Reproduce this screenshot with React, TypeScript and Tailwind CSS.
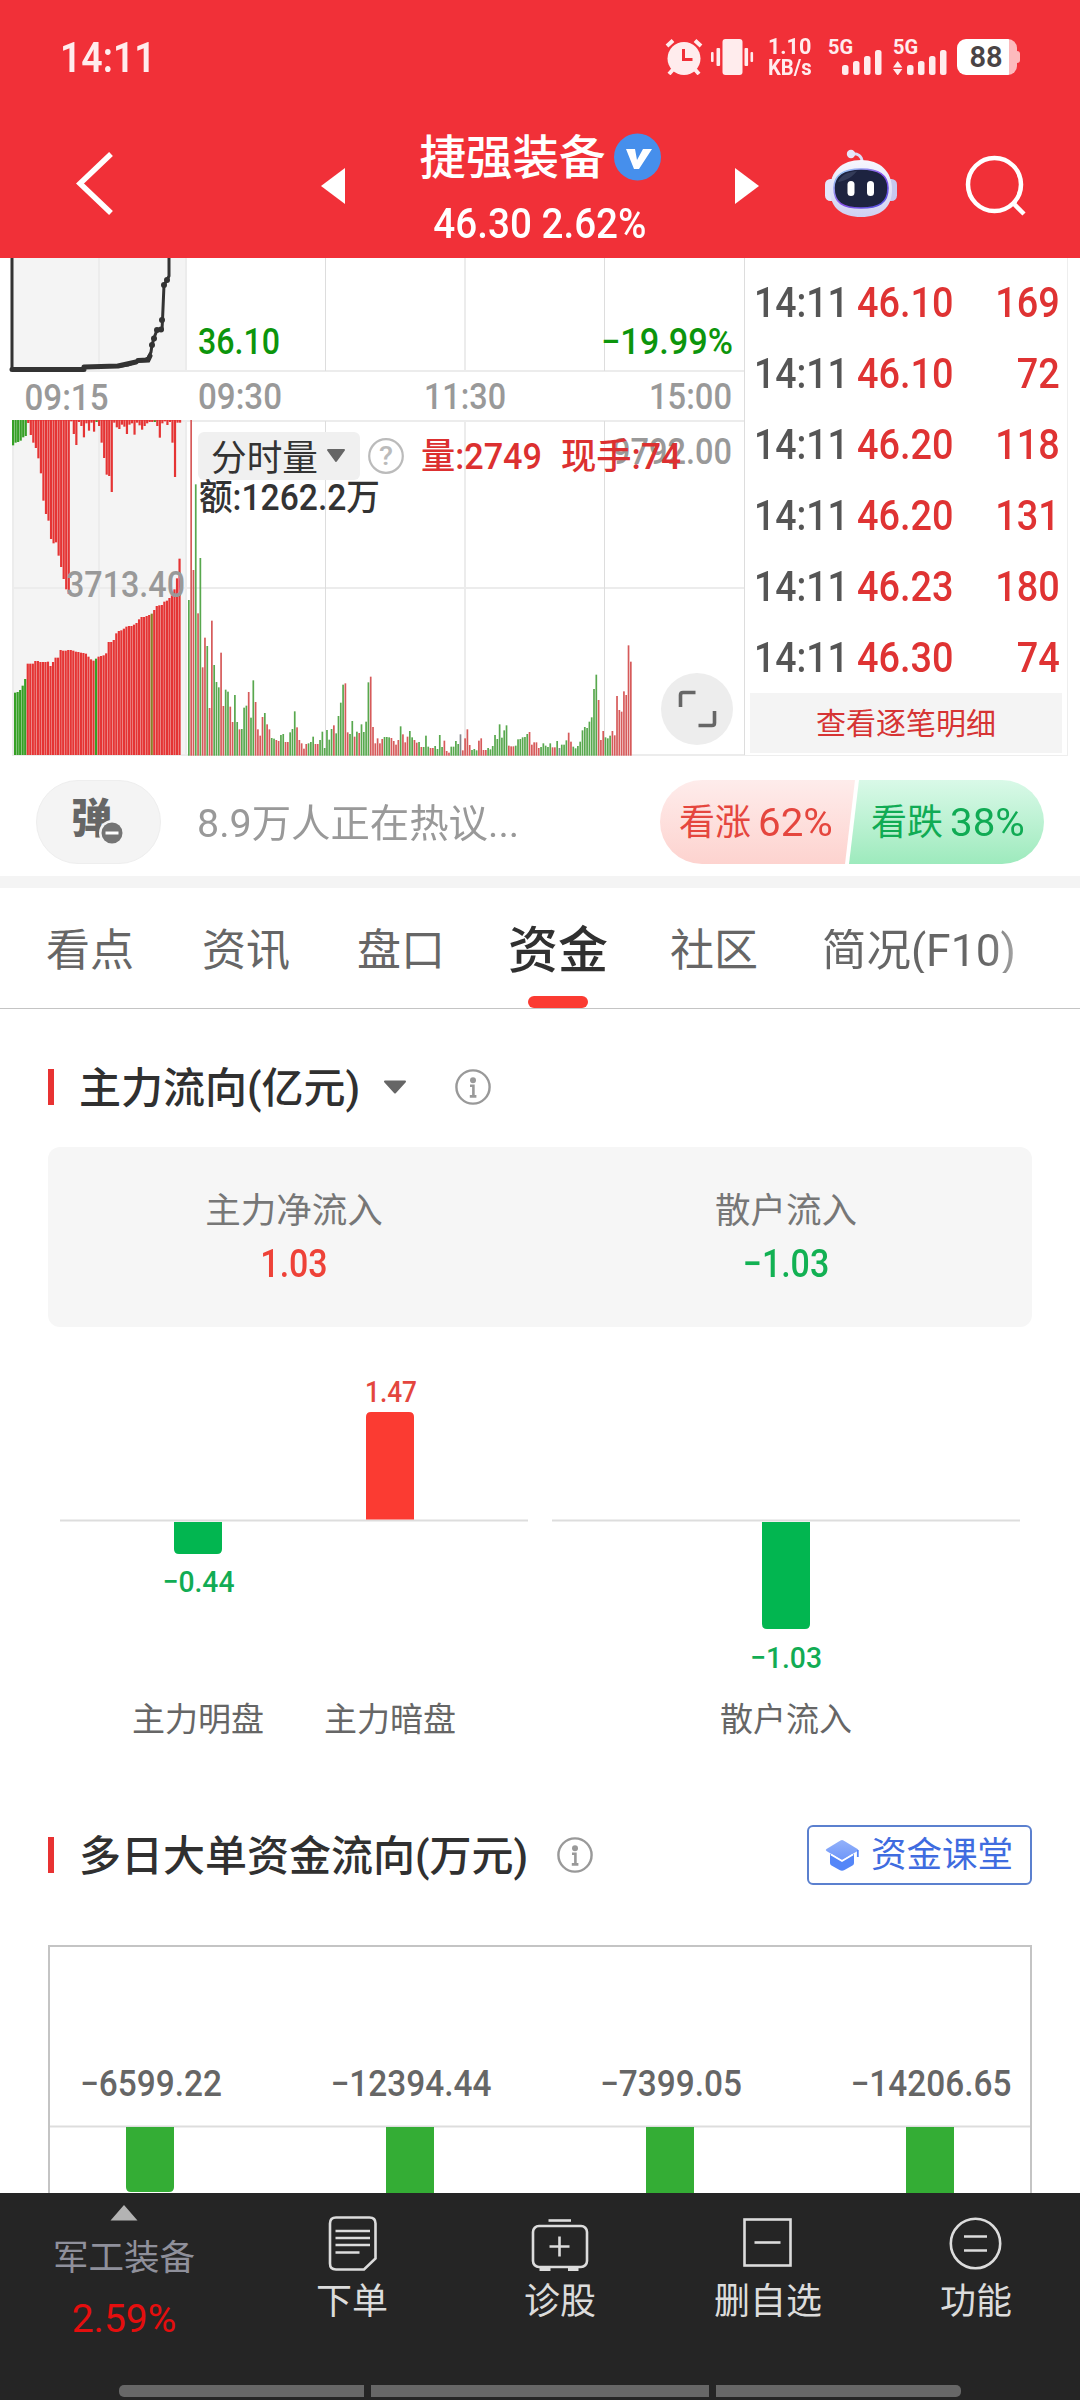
import type { ReactNode } from 'react';

type Tone = 'r' | 'g' | 'n';

const TONES: Record<Tone, string> = { r: '#d65a5a', g: '#58a84e', n: '#85858c' };

// minute volume, tone + top edge of the bar at 3x density (axis sits at 1517)
const VOLUME =
  'g1050 r510 r960 g703 r1090 g924 r1252 r1163 g1188 r1374 r1112 g1245 g1296 g1312 r1208 r1368 g1319 g1325 r1370 r1416 ' +
  'g1335 g1416 r1438 g1437 g1373 g1367 r1326 g1403 g1291 r1356 r1438 r1457 r1401 g1389 r1423 r1438 g1464 g1466 r1470 r1473 ' +
  'g1455 g1452 r1476 r1476 g1447 g1437 g1384 r1432 r1470 r1480 r1496 r1482 g1480 g1476 g1460 r1482 r1482 g1470 g1445 g1494 ' +
  'g1440 g1469 g1437 r1426 g1450 g1398 g1358 g1304 r1300 r1447 g1452 g1413 r1460 g1445 r1449 g1423 g1446 g1415 g1297 r1280 ' +
  'r1431 r1480 r1465 r1480 r1467 g1461 g1461 g1462 r1464 r1473 r1484 r1470 g1429 r1453 r1477 r1460 g1443 g1462 r1470 r1478 ' +
  'g1476 r1491 g1491 g1457 g1490 r1494 r1494 g1488 g1497 g1455 g1491 r1472 r1503 r1508 g1490 g1490 g1473 g1482 n1453 r1501 ' +
  'r1465 r1438 r1485 g1500 g1497 g1501 r1472 r1465 r1500 r1500 g1494 g1498 g1488 g1455 g1467 g1423 g1463 g1441 g1426 r1487 ' +
  'r1489 r1489 g1487 g1468 g1467 g1462 g1461 g1452 r1446 r1484 r1477 r1477 r1494 g1491 g1480 g1487 g1491 g1480 r1492 r1492 ' +
  'g1473 n1494 g1484 g1484 g1471 r1448 r1475 g1490 g1495 g1488 g1475 g1441 g1431 g1434 g1415 g1402 g1317 g1274 r1350 r1470 ' +
  'r1443 g1462 g1465 g1457 r1443 r1456 r1338 r1380 r1385 r1324 r1335 r1186 r1235';

// call auction: unmatched volume hangs from the top, matched volume grows from the axis
const UNMATCHED = [
  586, 578, 576, 572, 562, 558, 519, 555, 578, 594, 625, 670, 752, 792, 812, 867, 880, 877, 917, 951, 987, 1018, 1032,
  514, 552, 585, 516, 528, 562, 520, 542, 518, 545, 516, 528, 578, 624, 674, 678, 726, 518, 532, 537, 524, 530, 552,
  524, 520, 554, 518, 526, 539, 528, 520, 516, 516, 516, 528, 563, 520, 514, 525, 516, 578, 681, 518, 518,
];
const MATCHED = [
  1328, 1326, 1320, 1307, 1287, 1241, 1241, 1241, 1233, 1233, 1236, 1236, 1236, 1235, 1248, 1236, 1223, 1223, 1200,
  1202, 1202, 1200, 1200, 1202, 1205, 1206, 1208, 1209, 1211, 1220, 1228, 1232, 1226, 1220, 1218, 1216, 1210, 1176,
  1176, 1170, 1150, 1143, 1141, 1136, 1130, 1128, 1128, 1124, 1119, 1108, 1101, 1101, 1098, 1095, 1091, 1080, 1068,
  1066, 1065, 1055, 1052, 1044, 1036, 1018, 985, 926,
];

const PRICE_DOTS = [
  [152, 345],
  [154, 338.5],
  [157, 330],
  [161, 329.5],
  [162, 320],
  [164, 285],
  [167, 280],
];

const TRADES = [
  { time: '14:11', price: '46.10', lots: '169' },
  { time: '14:11', price: '46.10', lots: '72' },
  { time: '14:11', price: '46.20', lots: '118' },
  { time: '14:11', price: '46.20', lots: '131' },
  { time: '14:11', price: '46.23', lots: '180' },
  { time: '14:11', price: '46.30', lots: '74' },
];

const DAILY = [
  { x: 150, value: '-6599.22', w: 142, h: 65 },
  { x: 410, value: '-12394.44', w: 161, h: 90 },
  { x: 670, value: '-7399.05', w: 142, h: 90 },
  { x: 930, value: '-14206.65', w: 161, h: 90 },
];

interface LabelProps {
  x: number;
  y: number;
  w: number;
  size: number;
  fill: string;
  anchor?: 'start' | 'middle' | 'end';
  weight?: number;
  children: string;
}

function Label({ x, y, w, size, fill, anchor = 'start', weight = 500, children }: LabelProps) {
  return (
    <text
      x={x}
      y={y}
      fontSize={size}
      fill={fill}
      fontWeight={weight}
      textAnchor={anchor}
      textLength={w}
      lengthAdjust="spacingAndGlyphs"
    >
      {children.replace('-', '−')}
    </text>
  );
}

function InfoIcon() {
  return (
    <svg className="size-9 shrink-0" viewBox="0 0 36 36" fill="none" stroke="#999" strokeWidth="2.4">
      <circle cx="18" cy="18" r="16.6" />
      <circle cx="18" cy="11.2" r="3" fill="#999" stroke="none" />
      <path d="M15 16.8h3.4v10.4M14.8 27.4h6.6" strokeWidth="2.6" />
    </svg>
  );
}

function Signal({ data }: { data?: boolean }) {
  return (
    <div className="relative h-9 w-[55px] text-[#ffeced]">
      <span className="absolute top-0 left-0 text-[20px] leading-4 font-bold">5G</span>
      <svg className="absolute inset-0" width="55" height="36" fill="currentColor">
        {data && <path d="M0 28.5l4.700-6.500l4.700 6.500zM0 30l4.700 6.500l4.700-6.500z" />}
        <rect x="14" y="26" width="6.5" height="10" rx="2.5" />
        <rect x="25" y="22" width="6.5" height="14" rx="2.5" />
        <rect x="36" y="17" width="6.5" height="19" rx="2.5" />
        <rect x="47" y="11" width="6.5" height="25" rx="2.5" />
      </svg>
    </div>
  );
}

function StatusBar() {
  return (
    <div className="flex h-[114px] items-center pr-[60px] pl-[60px] text-[#ffeced]">
      <span className="origin-left scale-x-[.87] text-[43px] leading-none font-semibold">14:11</span>
      <div className="ml-auto flex items-center">
        <svg width="38" height="36" viewBox="0 0 38 36" fill="none" stroke="#ffeced" strokeWidth="4">
          <circle cx="19" cy="19.5" r="16.5" fill="#ffeced" stroke="none" />
          <path d="M2 7l6-5.500M36 7l-6-5.500M4 35l4-4.500M34 35l-4-4.500" />
          <path d="M18.500 10v10.500h9" stroke="#f13038" strokeWidth="3" />
        </svg>
        <svg className="ml-[8px]" width="43" height="36" fill="#ffeced">
          <rect x="11.5" width="20" height="36" rx="3" />
          <rect x="0" y="13" width="2.6" height="10" rx="1" />
          <rect x="5.5" y="9" width="3.6" height="18" rx="1" />
          <rect x="33.5" y="9" width="3.6" height="18" rx="1" />
          <rect x="39.5" y="13" width="2.6" height="10" rx="1" />
        </svg>
        <div className="ml-[14px] w-[44px] text-[22px] leading-[21px] font-bold whitespace-nowrap">
          <div className="origin-left scale-x-[.98]">1.10</div>
          <div className="origin-left scale-x-[.92]">KB/s</div>
        </div>
        <div className="ml-[16px]">
          <Signal />
        </div>
        <div className="ml-[10px]">
          <Signal data />
        </div>
        <div className="ml-[9px] flex items-center">
          <div className="flex h-9 w-[60px] items-center justify-center rounded-[9px] bg-[linear-gradient(90deg,#fff_52px,#fdbabd_52px)] pr-[2px] text-[29px] leading-none font-semibold text-[#4a4445]">
            88
          </div>
          <div className="h-3 w-[3px] rounded-r-sm bg-[#fdbabd]" />
        </div>
      </div>
    </div>
  );
}

function Robot() {
  return (
    <svg width="74" height="70" viewBox="0 0 74 70">
      <defs>
        <linearGradient id="shell" x1="0" y1="0" x2="0" y2="1">
          <stop offset="0" stopColor="#f7f7fe" />
          <stop offset="1" stopColor="#cfd0f2" />
        </linearGradient>
        <linearGradient id="rim" x1="0" y1="0" x2="1" y2="1">
          <stop offset="0" stopColor="#9be4f5" />
          <stop offset=".5" stopColor="#8a4fe8" />
          <stop offset="1" stopColor="#4a52dc" />
        </linearGradient>
      </defs>
      <path d="M27 5c7-1 11 2 11 8" fill="none" stroke="#dcdcf6" strokeWidth="3" />
      <circle cx="27" cy="5" r="4.2" fill="#e6e6fa" />
      <rect x="1" y="30" width="12" height="22" rx="5.5" fill="#e4e6fb" />
      <rect x="61" y="30" width="12" height="22" rx="5.5" fill="#c6c8ef" />
      <path d="M37 11C56 11 68 22 68 41C68 59 56 68 37 68C18 68 6 59 6 41C6 22 18 11 37 11Z" fill="url(#shell)" />
      <path
        d="M37 20C53 20 64 25 64 39C64 54 55 59 37 59C19 59 10 54 10 39C10 25 21 20 37 20Z"
        fill="#1d2340"
        stroke="url(#rim)"
        strokeWidth="1.6"
      />
      <path d="M14 33c3-7 9-10 19-11c-4 5-9 9-19 11z" fill="#454c6a" opacity=".6" />
      <rect x="23.5" y="32" width="7" height="15" rx="3.5" fill="#fff" />
      <rect x="43" y="32" width="7" height="15" rx="3.5" fill="#fff" />
    </svg>
  );
}

function TitleBar() {
  return (
    <div className="flex h-[144px] items-start">
      <svg className="mt-[37px] ml-[75px]" width="40" height="66" fill="none" stroke="#fff" strokeWidth="5.5">
        <path d="M36 3L5 32.500L36 62" />
      </svg>
      <svg className="mt-[54px] ml-[206px]" width="24" height="36" fill="#fff">
        <path d="M24 0v36L0 18z" />
      </svg>
      <div className="ml-[60px] flex w-[270px] flex-col items-center">
        <div className="mt-[18px] flex h-[50px] items-center gap-[8px]">
          <span className="pt-[2px] text-[46.5px] leading-none font-medium whitespace-nowrap text-white">捷强装备</span>
          <svg width="47" height="48" viewBox="0 0 47 48">
            <circle cx="23.5" cy="24" r="23.5" fill="#468fec" />
            <path d="M12 16h9l2 11l6-11h9L25 36h-5z" fill="#fff" />
          </svg>
        </div>
        <div className="mt-[21px] scale-x-[.92] text-[42px] leading-[42px] font-medium whitespace-nowrap text-white">
          46.30 2.62%
        </div>
      </div>
      <svg className="mt-[54px] ml-[60px]" width="24" height="36" fill="#fff">
        <path d="M0 0v36l24-18z" />
      </svg>
      <div className="mt-[35px] ml-[65px]">
        <Robot />
      </div>
      <svg className="mt-[40px] ml-[67px]" width="62" height="62" fill="none" stroke="#fff" strokeWidth="4.5">
        <circle cx="29.5" cy="30.5" r="26.5" />
        <path d="M48 49l11 11" />
      </svg>
    </div>
  );
}

function MinuteChart() {
  const bars = VOLUME.split(' ');

  return (
    <svg className="shrink-0" width="745" height="498" viewBox="0 258 745 498">
      <rect x="12" y="258" width="173" height="112" fill="#f4f4f4" />
      <rect x="12" y="421" width="173" height="334" fill="#f4f4f4" />
      <g stroke="#ececec" strokeWidth="2">
        <path d="M12 371H745M12 421H745M12 588H745M12 755H745" />
        <path d="M99 258V370M99 421V755M186 258V370M186 421V755M465 258V371M465 421V755M13 421V755" />
      </g>
      <path d="M325.500 258V371M325.500 421V755M604.500 258V371M604.500 421V755M744.500 258V755" stroke="#ddd" />

      {/* auction price line */}
      <path
        d="M12 258V369.500H83L84 366.500H118L128 365L138 361L147 360.500L151 352L152 345L154 338L157 330H162L162.500 320L164 285L167 280L169 276V258"
        fill="none"
        stroke="#333"
        strokeWidth="3"
        strokeLinejoin="round"
      />
      <path
        d="M12 369.500H84M84 367L118 366M118 366L136 362M138 360.500L148 360L150 356"
        stroke="#333"
        strokeWidth="5"
        strokeLinecap="round"
      />
      {PRICE_DOTS.map(([cx, cy]) => (
        <circle key={cx} cx={cx} cy={cy} r="3" fill="#333" />
      ))}

      {UNMATCHED.map((b, i) => (
        <rect
          key={i}
          x={12 + i * 2.53}
          y="420"
          width="2.2"
          height={(b - 510) / 3}
          fill={i < 6 || i === 33 || i === 56 ? '#36a026' : '#e53434'}
        />
      ))}
      <path d="M27 420.500H181" stroke="#e53434" opacity=".5" />
      {MATCHED.map((t, i) => (
        <rect
          key={i}
          x={14 + i * 2.53}
          y={250 + t / 3}
          width="2.2"
          height={(1515 - t) / 3}
          fill={i < 5 || i === 32 ? '#36a026' : i === 54 ? '#8a7f26' : '#e53434'}
        />
      ))}
      {bars.map((b, i) => {
        const top = Number(b.slice(1));
        return (
          <rect
            key={i}
            x={188 + i * 2.302}
            y={250 + top / 3}
            width="1.7"
            height={(1517 - top) / 3}
            fill={TONES[b[0] as Tone]}
          />
        );
      })}

      <Label x={198} y={354} w={82} size={36} fill="#0c950c">36.10</Label>
      <Label x={733} y={354} w={132} size={36} fill="#0c950c" anchor="end">-19.99%</Label>
      <Label x={24.5} y={409.5} w={84} size={36} fill="#999">09:15</Label>
      <Label x={198} y={409} w={84} size={36} fill="#999">09:30</Label>
      <Label x={465} y={409} w={82} size={36} fill="#999" anchor="middle">11:30</Label>
      <Label x={732} y={409} w={83} size={36} fill="#999" anchor="end">15:00</Label>
      <Label x={66} y={596.5} w={119} size={36} fill="#999">3713.40</Label>
      <Label x={732} y={463.5} w={120} size={36} fill="#999" anchor="end">9792.00</Label>

      <rect x="198" y="432" width="162" height="48" rx="6" fill="#f0f0f0" />
      <Label x={211} y={470.5} w={107} size={36} fill="#333" weight={400}>分时量</Label>
      <path d="M328 450h16l-8 11z" fill="#666" stroke="#666" strokeWidth="2" strokeLinejoin="round" />
      <circle cx="386" cy="456" r="16.8" fill="none" stroke="#bbb" strokeWidth="2.2" />
      <Label x={386} y={465} w={14} size={25} fill="#bbb" anchor="middle">?</Label>
      <Label x={421} y={469} w={121} size={36} fill="#dc3030">量:2749</Label>
      <Label x={561} y={469} w={120} size={36} fill="#dc3030">现手:74</Label>
      <Label x={199} y={509.5} w={181} size={36} fill="#333">额:1262.2万</Label>

      <circle cx="697" cy="709" r="36" fill="#ededed" />
      <path
        d="M680.500 707V695Q680.500 692.500 683 692.500H695.500M714.500 711V723Q714.500 725.500 712 725.500H698.500"
        fill="none"
        stroke="#666"
        strokeWidth="3.6"
      />
    </svg>
  );
}

function Trades() {
  return (
    <div className="flex h-[498px] w-[323px] flex-col border-r border-b border-[#eee] pt-[9px] pr-[5px] pl-[5px]">
      {TRADES.map((t, i) => (
        <div
          key={i}
          className="flex h-[71px] shrink-0 items-center pt-px pr-[2px] pl-[4px] text-[42px] leading-none font-medium text-[#df3333]"
        >
          <span className="w-[103px] origin-left scale-x-[.89] text-[#555]">{t.time}</span>
          <span className="origin-left scale-x-[.9]">{t.price}</span>
          <span className="ml-auto origin-right scale-x-[.9]">{t.lots}</span>
        </div>
      ))}
      <button className="flex h-[60px] shrink-0 items-center justify-center bg-[#f4f4f4] pt-[2px] text-[30px] leading-none text-[#d63434]">
        查看逐笔明细
      </button>
    </div>
  );
}

function CommentBar() {
  return (
    <div className="flex h-[120px] items-center pt-[12px] pr-[36px] pl-[36px]">
      <div className="relative flex h-[84px] w-[125px] items-center rounded-[42px] border border-[#eee] bg-[#f4f4f4] pl-[34px]">
        <span className="pb-[5px] text-[41px] leading-none font-black text-[#666]">弹</span>
        <svg className="absolute top-[39px] left-[62px]" width="26" height="26">
          <circle cx="13" cy="13" r="13" fill="#f4f4f4" />
          <circle cx="13" cy="13" r="10.5" fill="#747474" />
          <path d="M6.500 13h13" stroke="#fff" strokeWidth="3" />
        </svg>
      </div>
      <span className="ml-[36px] origin-left scale-x-[1.01] pt-[5px] text-[39px] leading-none whitespace-nowrap text-[#999]">
        8.9万人正在热议...
      </span>
      <div className="ml-auto flex h-[84px] w-[384px] overflow-hidden rounded-[42px] text-[36px] leading-none whitespace-nowrap">
        <div className="flex w-[195px] shrink-0 items-center bg-linear-to-b from-[#feeceb] to-[#fdd3cf] pt-[2px] pl-[19px] text-[#e5463e] [clip-path:polygon(0_0,100%_0,185px_100%,0_100%)]">
          <span className="mr-[7px]">看涨</span>
          <span className="origin-left scale-x-[1.06] text-[38px]">62%</span>
        </div>
        <div className="-ml-[6px] flex flex-1 items-center bg-linear-to-b from-[#d9f9e8] to-[#9deabd] pt-[2px] pl-[22px] text-[#10ab54] [clip-path:polygon(10px_0,100%_0,100%_100%,0_100%)]">
          <span className="mr-[7px]">看跌</span>
          <span className="origin-left scale-x-[1.06] text-[38px]">38%</span>
        </div>
      </div>
    </div>
  );
}

function Tabs() {
  return (
    <div className="relative flex h-[121px] items-center border-b border-[#c4c4c4] pt-[6px] pl-[46px] text-[44px] leading-none whitespace-nowrap text-[#666]">
      <span className="w-[156px]">看点</span>
      <span className="w-[155px]">资讯</span>
      <span className="w-[151px]">盘口</span>
      <span className="w-[162px] text-[50px] font-medium text-[#303030]">资金</span>
      <span className="w-[152px]">社区</span>
      <span className="origin-left scale-x-[1.01] bg-linear-to-r from-[#666] from-85% to-[#aaa] bg-clip-text text-transparent">
        简况(F10)
      </span>
      <div className="absolute bottom-0 left-[528px] h-3 w-[60px] rounded-[6px] bg-[#fb3b32]" />
    </div>
  );
}

function SectionTitle({ children }: { children: ReactNode }) {
  return (
    <>
      <div className="h-9 w-[6px] bg-[#e83232]" />
      <h2 className="ml-[25px] pt-[4px] text-[42px] leading-none font-medium whitespace-nowrap text-[#303030]">
        {children}
      </h2>
    </>
  );
}

function MainFlow() {
  return (
    <section className="px-[48px]">
      <div className="flex h-[138px] items-center pt-[18px]">
        <SectionTitle>主力流向(亿元)</SectionTitle>
        <svg
          className="ml-[23px]"
          width="24"
          height="14"
          fill="#666"
          stroke="#666"
          strokeWidth="2"
          strokeLinejoin="round"
        >
          <path d="M2 1.500h20l-10 11z" />
        </svg>
        <div className="ml-[48px]">
          <InfoIcon />
        </div>
      </div>
      <div className="grid h-[180px] grid-cols-2 rounded-xl bg-[#f6f6f6] pt-[47px] text-center leading-none">
        <div>
          <p className="text-[35.5px] text-[#777]">主力净流入</p>
          <p className="mt-[15px] scale-x-[.87] text-[39px] font-medium text-[#ee4238]">1.03</p>
        </div>
        <div>
          <p className="text-[35.5px] text-[#777]">散户流入</p>
          <p className="mt-[15px] scale-x-[.87] text-[39px] font-medium text-[#12b153]">−1.03</p>
        </div>
      </div>
      <svg className="block" width="984" height="433" viewBox="48 1327 984 433">
        <path d="M60 1520.500H528M552 1520.500H1020" stroke="#ddd" strokeWidth="2" />
        <path d="M366 1519.500V1417Q366 1412 371 1412H409Q414 1412 414 1417V1519.500z" fill="#fb3b32" />
        <path d="M174 1522V1549Q174 1554 179 1554H217Q222 1554 222 1549V1522z" fill="#02b650" />
        <path d="M762 1522V1624Q762 1629 767 1629H805Q810 1629 810 1624V1522z" fill="#02b650" />
        <Label x={391} y={1402} w={52} size={30} fill="#e4463e" anchor="middle">1.47</Label>
        <Label x={198.5} y={1592} w={72} size={30} fill="#12ac54" anchor="middle">-0.44</Label>
        <Label x={786} y={1668} w={72} size={30} fill="#12ac54" anchor="middle">-1.03</Label>
        <Label x={198} y={1731} w={132} size={33} fill="#666" weight={400} anchor="middle">主力明盘</Label>
        <Label x={390} y={1731} w={132} size={33} fill="#666" weight={400} anchor="middle">主力暗盘</Label>
        <Label x={786} y={1731} w={132} size={33} fill="#666" weight={400} anchor="middle">散户流入</Label>
      </svg>
    </section>
  );
}

function DailyFlow() {
  return (
    <section className="px-[48px]">
      <div className="flex h-[185px] items-center pt-[5px]">
        <SectionTitle>多日大单资金流向(万元)</SectionTitle>
        <div className="ml-[29px]">
          <InfoIcon />
        </div>
        <button className="ml-auto flex h-[60px] w-[225px] items-center rounded-md border-2 border-[#5b80cf] pl-[15px] text-[35.5px] leading-none whitespace-nowrap text-[#3f6ce0]">
          <svg className="mr-[11px] shrink-0" width="36" height="32" viewBox="0 0 36 32">
            <defs>
              <linearGradient id="cap" x1="0" y1="0" x2="0" y2="1">
                <stop offset="0" stopColor="#93b1fa" />
                <stop offset="1" stopColor="#6f97f9" />
              </linearGradient>
            </defs>
            <path
              d="M6 15l12 7l12-7v9q0 1.500-1.500 2.500l-8 4.500q-2.500 1.300-5 0l-8-4.500Q6 25.500 6 24z"
              fill="#5486f8"
            />
            <path
              d="M16.500 1.500q1.500-.8 3 0L33.500 10q1.500 1 0 2L19.500 20.500q-1.500.8-3 0L2.500 12q-1.500-1 0-2z"
              fill="url(#cap)"
            />
            <path d="M7 15.500l11 6.500l11-6.500" fill="none" stroke="#fff" strokeWidth="1.8" />
            <path d="M33.800 11v7" stroke="#5486f8" strokeWidth="1.8" />
          </svg>
          <span className="pt-[2px]">资金课堂</span>
        </button>
      </div>
      <svg className="block" width="984" height="248" viewBox="48 1945 984 248">
        <path d="M49 2193V1946H1031V2193" fill="none" stroke="#c4c4c4" strokeWidth="2" />
        <path d="M50 2126.500H1030" stroke="#ddd" strokeWidth="2" />
        {DAILY.map((d) => (
          <g key={d.x}>
            <path d={`M${d.x - 24} 2127v${d.h - 5}q0 5 5 5h38q5 0 5-5V2127z`} fill="#34ad35" />
            <Label x={d.x + 1} y={2096} w={d.w} size={36} fill="#666" anchor="middle">
              {d.value}
            </Label>
          </g>
        ))}
      </svg>
    </section>
  );
}

function NavItem({ label, children }: { label: string; children: ReactNode }) {
  return (
    <div className="flex w-[208px] flex-col items-center pt-[21px] text-[36px] leading-none text-[#dcdcdc]">
      <svg width="60" height="60" fill="none" stroke="#dcdcdc" strokeWidth="2.6">
        {children}
      </svg>
      <span className="mt-[10px]">{label}</span>
    </div>
  );
}

function BottomNav() {
  return (
    <nav className="flex h-[207px] shrink-0 flex-col bg-[#252525]">
      <div className="flex h-[192px]">
        <div className="flex w-[248px] flex-col items-center pt-[12px] leading-none">
          <svg width="28" height="16" fill="#b3b3b3">
            <path d="M14 0l13.500 15.500H.500z" />
          </svg>
          <span className="mt-[20px] text-[35.5px] text-[#8f909b]">军工装备</span>
          <span className="mt-[23px] text-[39px] text-[#e50e0e]">2.59%</span>
        </div>
        <NavItem label="下单">
          <path d="M14 3.500H47.500Q53.500 3.500 53.500 9.500V44.500L42 55.500H14Q8 55.500 8 49.500V9.500Q8 3.500 14 3.500z" />
          <path d="M13.500 17h34.500M13.500 24h34.500M13.500 31h34.500M13.500 38.500h24" />
        </NavItem>
        <NavItem label="诊股">
          <path d="M18.500 6.500h22.500" />
          <rect x="3" y="12" width="54" height="41" rx="6" />
          <path d="M29.500 22.500v20M19.500 32.500h20" />
          <path d="M9.500 55h11M38 55h10.500" strokeWidth="4" />
        </NavItem>
        <NavItem label="删自选">
          <rect x="6.5" y="5.5" width="46" height="46" />
          <path d="M16.500 28.500h26" />
        </NavItem>
        <NavItem label="功能">
          <circle cx="29.5" cy="29.5" r="24.7" />
          <path d="M18 22.500h23M18 36.500h23" />
        </NavItem>
      </div>
      <div className="flex gap-[7px] pl-[119px]">
        <div className="h-3 w-[245px] rounded-l-[5px] bg-[#676767]" />
        <div className="h-3 w-[338px] bg-[#676767]" />
        <div className="h-3 w-[245px] rounded-r-[5px] bg-[#676767]" />
      </div>
    </nav>
  );
}

export default function App() {
  return (
    <div className="flex h-[2400px] w-[1080px] flex-col overflow-hidden bg-white font-[Roboto,'Noto_Sans_CJK_SC',sans-serif]">
      <header className="h-[258px] shrink-0 bg-[#f13038]">
        <StatusBar />
        <TitleBar />
      </header>
      <main className="flex-1">
        <div className="flex">
          <MinuteChart />
          <Trades />
        </div>
        <CommentBar />
        <div className="h-3 bg-[#f4f4f4]" />
        <Tabs />
        <MainFlow />
        <DailyFlow />
      </main>
      <BottomNav />
    </div>
  );
}
